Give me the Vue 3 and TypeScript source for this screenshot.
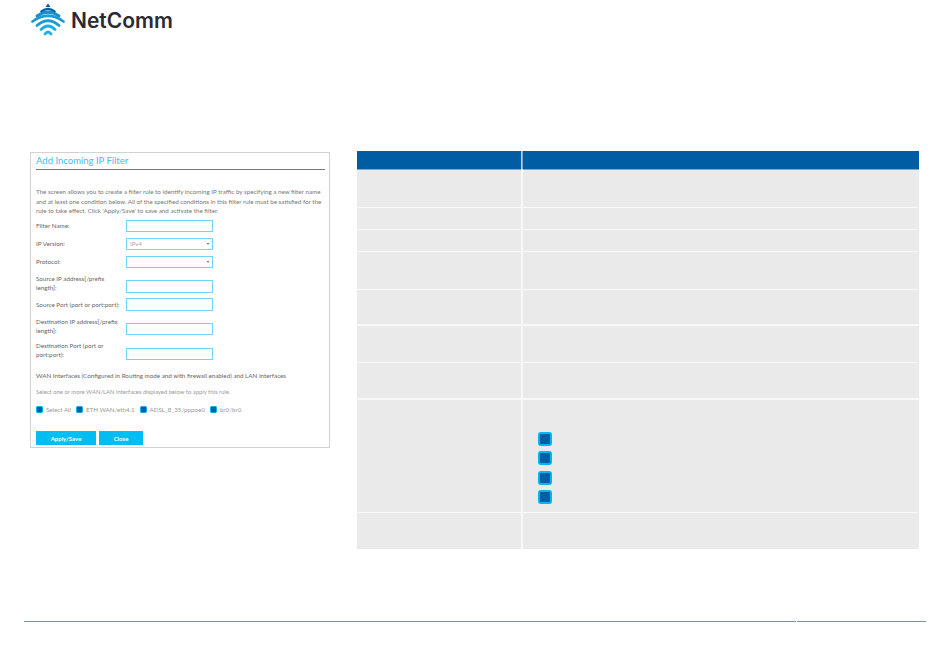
<script setup lang="ts">
const rows = [
  { h: 36.5 }, { h: 21 }, { h: 21 }, { h: 36.5 }, { h: 34.5 }, { h: 36 }, { h: 35.5 },
  { h: 112.3, checks: 4 }, { h: 36 },
]
const fields = [
  { label: 'Filter Name:', kind: 'text' },
  { label: 'IP Version:', kind: 'select', value: 'IPv4' },
  { label: 'Protocol:', kind: 'select', value: '' },
  { label: 'Source IP address[/prefix length]:', kind: 'text', tall: true },
  { label: 'Source Port (port or port:port):', kind: 'text' },
  { label: 'Destination IP address[/prefix length]:', kind: 'text', tall: true },
  { label: 'Destination Port (port or port:port):', kind: 'text', tall: true },
]
const ifaces = ['Select All', 'ETH WAN/eth4.1', 'ADSL_8_35/pppoe0', 'br0/br0']
</script>

<template>
  <div class="page">
    <header class="brand">
      <svg class="mark" width="36" height="34" viewBox="0 0 36 34" fill="none">
        <path d="M18 1.500 L20.500 5 L15.500 5 Z" fill="#005ea4" />
        <path d="M11.500 9.500 Q18 4.500 24.500 9.500" stroke="#005ea4" stroke-width="2.600" stroke-linecap="round" />
        <path d="M7 14 Q18 6.500 29 14" stroke="#1a8ccb" stroke-width="2.800" stroke-linecap="round" />
        <path d="M2.500 19.500 Q18 8 33.500 19.500" stroke="#1c9ad6" stroke-width="2.800" stroke-linecap="round" />
        <path d="M7 23.500 Q18 14 29 23.500" stroke="#1c9ad6" stroke-width="2.800" stroke-linecap="round" />
        <path d="M11 27.500 Q18 20.500 25 27.500" stroke="#18aee6" stroke-width="2.800" stroke-linecap="round" />
        <path d="M15 32 Q18 28 21 32" stroke="#18aee6" stroke-width="2.800" stroke-linecap="round" />
      </svg>
      <span class="wordmark">NetComm</span>
    </header>

    <main class="content">
      <section class="card">
        <h2 class="title">Add Incoming IP Filter</h2>
        <p class="intro">The screen allows you to create a filter rule to identify incoming IP traffic by specifying a new filter name and at least one condition below. All of the specified conditions in this filter rule must be satisfied for the rule to take effect. Click 'Apply/Save' to save and activate the filter.</p>
        <div class="form">
          <div v-for="f in fields" :key="f.label" class="field" :class="{ tall: f.tall }">
            <span class="label">{{ f.label }}</span>
            <div class="control" :class="{ select: f.kind === 'select' }">
              <span class="value">{{ f.value }}</span>
              <span v-if="f.kind === 'select'" class="caret"></span>
            </div>
          </div>
        </div>
        <p class="wan">WAN Interfaces (Configured in Routing mode and with firewall enabled) and LAN Interfaces</p>
        <p class="hint">Select one or more WAN/LAN interfaces displayed below to apply this rule.</p>
        <div class="ifaces">
          <label v-for="i in ifaces" :key="i" class="iface"><span class="box small"></span>{{ i }}</label>
        </div>
        <div class="actions">
          <button class="btn apply">Apply/Save</button>
          <button class="btn close">Close</button>
        </div>
      </section>

      <section class="table">
        <div class="th"></div>
        <div class="th"></div>
        <template v-for="(r, n) in rows" :key="n">
          <div class="td" :style="{ height: r.h + 'px' }"></div>
          <div class="td" :style="{ height: r.h + 'px' }">
            <div v-if="r.checks" class="checks">
              <span v-for="c in r.checks" :key="c" class="box"></span>
            </div>
          </div>
        </template>
      </section>
    </main>

    <footer class="foot">
      <span class="seg long"></span>
      <span class="seg short"></span>
    </footer>
  </div>
</template>

<style scoped>
.page {
  width: 950px;
  height: 660px;
  display: flex;
  flex-direction: column;
  background: #fff;
  font-family: Lato, "Liberation Sans", sans-serif;
  overflow: hidden;
  box-sizing: border-box;
}
.brand {
  height: 151px;
  box-sizing: border-box;
  padding: 2px 0 0 30px;
  display: flex;
  align-items: flex-start;
}
.mark { flex: none; }
.wordmark {
  margin: 6px 0 0 5px;
  font-family: Inter, "Liberation Sans", sans-serif;
  font-weight: 600;
  font-size: 21px;
  line-height: 26px;
  color: #2b2a33;
}
.content {
  display: flex;
  align-items: flex-start;
  padding-left: 30px;
  gap: 27px;
}
.card {
  width: 300px;
  height: 296px;
  margin-top: 1px;
  box-sizing: border-box;
  border: 1.500px solid #d2d2d2;
  padding: 0 4px 0 5px;
}
.title {
  margin: 0;
  height: 16px;
  border-bottom: 1px solid #777;
  font-size: 9.500px;
  line-height: 15px;
  font-weight: 400;
  color: #3fbdee;
}
.intro {
  margin: 17px 0 0;
  font-size: 6.250px;
  line-height: 9.500px;
  color: #777;
}
.form {
  margin-top: 4px;
  display: flex;
  flex-direction: column;
  gap: 5.500px;
}
.field {
  display: flex;
  align-items: center;
  height: 12.500px;
}
.field.tall {
  height: 19.200px;
  align-items: flex-end;
}
.label {
  width: 90px;
  flex: none;
  font-size: 6.250px;
  line-height: 9px;
  color: #666;
  align-self: center;
  padding-right: 6px;
  box-sizing: border-box;
}
.control {
  width: 87px;
  height: 12.500px;
  box-sizing: border-box;
  border: 1px solid #6dd6f6;
  display: flex;
  align-items: center;
  justify-content: space-between;
  padding: 0 3px;
  background: #fff;
}
.value {
  font-size: 6px;
  color: #aaa;
}
.caret {
  width: 0;
  height: 0;
  border-left: 1.500px solid transparent;
  border-right: 1.500px solid transparent;
  border-top: 2.500px solid #555;
}
.wan {
  margin: 11px 0 0;
  font-size: 6.250px;
  line-height: 9px;
  color: #666;
}
.hint {
  margin: 7px 0 0;
  font-size: 5.900px;
  line-height: 9px;
  color: #999;
}
.ifaces {
  margin-top: 10px;
  display: flex;
  gap: 5px;
}
.iface {
  display: flex;
  align-items: center;
  gap: 3px;
  font-size: 6.200px;
  color: #999;
}
.box {
  display: block;
  width: 14px;
  height: 14px;
  box-sizing: border-box;
  border: 2px solid #00b5ef;
  border-radius: 3px;
  background: #005ea4;
}
.box.small {
  width: 7px;
  height: 7px;
  border-width: 0.500px;
  border-radius: 1.500px;
}
.actions {
  margin-top: 18px;
  display: flex;
  gap: 3px;
}
.btn {
  height: 14px;
  padding: 0;
  border: 0;
  background: #00bdf2;
  color: #fff;
  font-family: inherit;
  font-size: 6px;
  font-weight: 700;
}
.apply { width: 60px; }
.close { width: 44px; }
.table {
  width: 562px;
  display: grid;
  grid-template-columns: 164px 396px;
  gap: 1.200px 2px;
  background: #f8f8f8;
}
.th {
  height: 18px;
  background: #005da3;
  box-shadow: 0 1px 0 #7fa9cc;
}
.th + .th {
  box-shadow: 0 1px 0 #7fa9cc, -1.500px 0 0 #7fa9cc;
}
.td {
  background: #eaeaea;
  box-sizing: border-box;
}
.checks {
  display: flex;
  flex-direction: column;
  gap: 5.400px;
  padding: 32.600px 0 0 15px;
}
.foot {
  margin: auto 24px 38px;
  display: flex;
  gap: 1px;
}
.seg {
  height: 1px;
  background: #7f929f;
}
.long { width: 772px; }
.short { flex: 1; }
</style>

<style>
html, body { margin: 0; background: #fff; }
</style>
